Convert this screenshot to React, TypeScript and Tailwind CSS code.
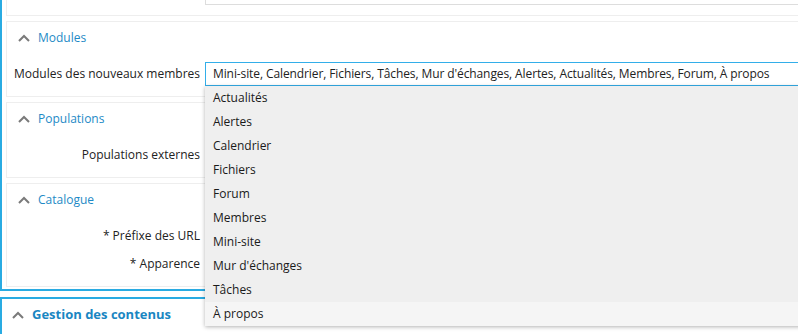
const modules = [
  "Actualités",
  "Alertes",
  "Calendrier",
  "Fichiers",
  "Forum",
  "Membres",
  "Mini-site",
  "Mur d'échanges",
  "Tâches",
  "À propos",
];

const Chevron = ({ className }: { className?: string }) => (
  <svg className={className} width="12" height="8" viewBox="0 0 12 8" fill="none">
    <polyline points="1,7 6,2 11,7" stroke="#7a7a7a" strokeWidth="2" />
  </svg>
);

const PanelHeader = ({ title }: { title: string }) => (
  <div className="flex items-center h-[32px] pl-[11px] gap-[8px]">
    <Chevron />
    <span className="text-[#1e8ac6]">{title}</span>
  </div>
);

const Row = ({ label, children }: { label: string; children?: React.ReactNode }) => (
  <div className="flex items-center h-[28px]">
    <div className="w-[193px] text-right text-[#222]">{label}</div>
    <div className="flex-1 ml-[5px]">
      {children ?? <div className="h-[24px] border border-[#dddddd] bg-white" />}
    </div>
  </div>
);

export default function App() {
  return (
    <div className="w-[798px] h-[334px] overflow-hidden bg-white font-['Open_Sans',sans-serif] text-[12px] text-[#222]">
      <div className="w-[840px]">
        <div className="-mt-[28px] border-l-2 border-r-2 border-b-2 border-[#29abe2] pl-[4px] pb-[2px] flex flex-col gap-[5px]">
          <div className="border border-[#eeeeee] pt-[6px] pb-[8px]">
            <Row label="" />
          </div>

          <div className="border border-[#eeeeee]">
            <PanelHeader title="Modules" />
            <div className="pt-[6px] pb-[8px]">
              <Row label="Modules des nouveaux membres">
                <div className="relative">
                  <div className="h-[24px] border border-[#33aee9] bg-white pl-[7px] flex items-center whitespace-nowrap tracking-[-0.1px]">
                    Mini-site, Calendrier, Fichiers, Tâches, Mur d'échanges, Alertes, Actualités, Membres, Forum, À propos
                  </div>
                  <ul className="absolute z-10 top-full left-0 right-0 bg-[#efefef] shadow-[0_1px_4px_rgba(0,0,0,0.3)]">
                    {modules.map((m, i) => (
                      <li
                        key={m}
                        className={
                          "h-[24px] flex items-center pl-[8px] text-[#1a1a1a] " +
                          (i === modules.length - 1 ? "bg-[#f5f5f5]" : "")
                        }
                      >
                        {m}
                      </li>
                    ))}
                  </ul>
                </div>
              </Row>
            </div>
          </div>

          <div className="border border-[#eeeeee]">
            <PanelHeader title="Populations" />
            <div className="pt-[6px] pb-[8px]">
              <Row label="Populations externes" />
            </div>
          </div>

          <div className="border border-[#eeeeee]">
            <PanelHeader title="Catalogue" />
            <div className="pt-[6px] pb-[8px]">
              <Row label="* Préfixe des URL" />
              <Row label="* Apparence" />
            </div>
          </div>
        </div>

        <div className="mt-[6px] border-l-2 border-r-2 border-t-2 border-[#29abe2] h-[60px]">
          <div className="flex items-center h-[32px] pl-[10px] gap-[8px]">
            <Chevron />
            <span className="text-[#1a86c2] font-bold text-[13px]">Gestion des contenus</span>
          </div>
        </div>
      </div>
    </div>
  );
}
